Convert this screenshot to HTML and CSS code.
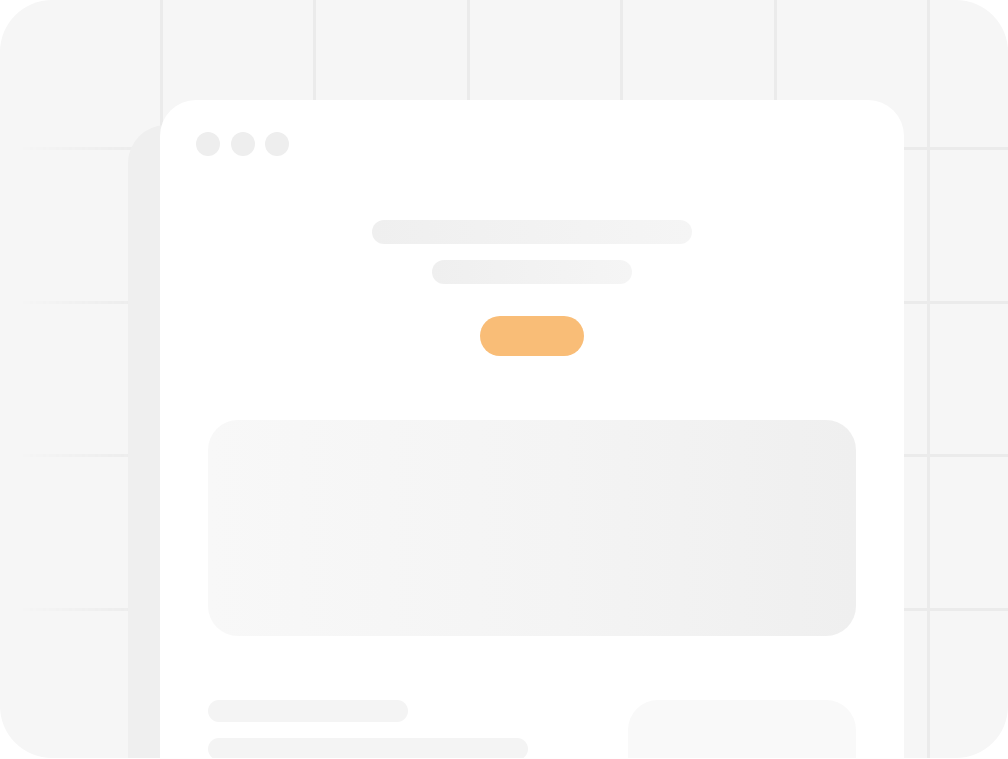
FILE: index.html
```html
<!DOCTYPE html>
<html lang="en">
<head>
<meta charset="utf-8">
<title>Page skeleton</title>
<link rel="stylesheet" href="styles.css">
</head>
<body>
<div class="frame">
  <div class="grid-h"></div>
  <div class="grid-v"></div>
  <div class="stack">
    <div class="card">
      <div class="dots">
        <span class="dot"></span><span class="dot"></span><span class="dot"></span>
      </div>
      <div class="hero">
        <div class="bar bar-title"></div>
        <div class="bar bar-sub"></div>
        <div class="cta"></div>
      </div>
      <div class="panel"></div>
      <div class="lower">
        <div class="lines">
          <div class="line line-a"></div>
          <div class="line line-b"></div>
        </div>
        <div class="side-box"></div>
      </div>
    </div>
  </div>
</div>
</body>
</html>
```

FILE: styles.css
```css
html, body {
  margin: 0;
  padding: 0;
  background: #ffffff;
  font-family: "Liberation Sans", Arial, sans-serif;
}

.frame {
  position: relative;
  width: 1008px;
  height: 758px;
  border-radius: 52px;
  overflow: hidden;
  background: #f6f6f6;
}

.grid-h {
  position: absolute;
  left: 0;
  right: 0;
  top: 147px;
  bottom: 0;
  background-image: repeating-linear-gradient(to bottom, #ebebeb 0, #ebebeb 3px, transparent 3px, transparent 153.6px);
  -webkit-mask-image: linear-gradient(to right, transparent 0, transparent 20px, #000 150px);
  mask-image: linear-gradient(to right, transparent 0, transparent 20px, #000 150px);
}

.grid-v {
  position: absolute;
  left: 159.5px;
  right: 0;
  top: 0;
  bottom: 0;
  background-image: repeating-linear-gradient(to right, #ebebeb 0, #ebebeb 3px, transparent 3px, transparent 153.4px);
}

.stack {
  position: relative;
  isolation: isolate;
  padding: 100px 104px 0 160px;
}

.card {
  position: relative;
  background: #ffffff;
  border-radius: 36px 36px 0 0;
  padding: 32px 48px 0 48px;
  height: 658px;
  box-sizing: border-box;
}

.card::before {
  content: "";
  position: absolute;
  left: -32px;
  top: 25px;
  width: 120px;
  height: 800px;
  background: #efefef;
  border-radius: 38px 0 0 0;
  z-index: -1;
}

.dots {
  display: flex;
  gap: 10.5px;
  margin-left: -12px;
}

.dot {
  width: 24px;
  height: 24px;
  border-radius: 50%;
  background: #eeeeee;
}

.hero {
  display: flex;
  flex-direction: column;
  align-items: center;
  margin-top: 64px;
}

.bar {
  height: 24px;
  border-radius: 12px;
  background: linear-gradient(to right, #efefef, #f5f5f5);
}

.bar-title { width: 320px; }
.bar-sub { width: 200px; margin-top: 16px; }

.cta {
  width: 104px;
  height: 40px;
  border-radius: 20px;
  background: #f9bd77;
  margin-top: 32px;
}

.panel {
  margin-top: 64px;
  height: 216px;
  border-radius: 30px;
  background: linear-gradient(to right, #f8f8f8, #f4f4f4 55%, #efefef);
}

.lower {
  display: flex;
  justify-content: space-between;
  margin-top: 64px;
}

.lines {
  display: flex;
  flex-direction: column;
  gap: 16px;
}

.line {
  height: 22px;
  border-radius: 11px;
  background: #f4f4f4;
}

.line-a { width: 200px; }
.line-b { width: 320px; }

.side-box {
  width: 228px;
  height: 120px;
  border-radius: 30px;
  background: #f9f9f9;
}
```
